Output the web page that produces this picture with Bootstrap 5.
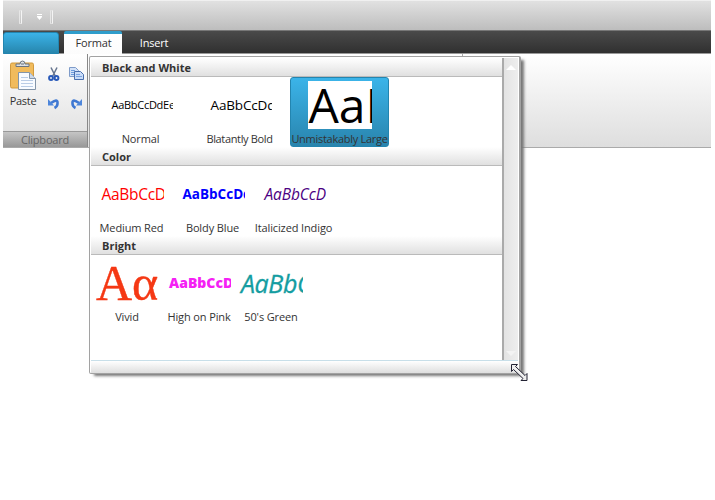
<!DOCTYPE html>
<html lang="en">
<head>
<meta charset="utf-8">
<title>Ribbon format gallery</title>
<link href="https://cdn.jsdelivr.net/npm/bootstrap@5.3.0/dist/css/bootstrap.min.css" rel="stylesheet">
<style>
body{width:715px;height:500px;font:11px/18px "Open Sans","Noto Sans",sans-serif;color:#333}
.ribbon{width:708px;margin-left:3px}
.quick{height:31px;background:linear-gradient(#e1e1e1,#bdbdbd);border-top:1px solid #f0f0f0;border-bottom:1px solid #777;padding:9px 0 0 16px}
.grip{width:3px;height:14px;border:1px solid #eee;border-color:#ddd #f4f4f4 #ddd #e6e6e6}
.tabs{height:23px;background:linear-gradient(#4a4a4a,#303030);border-bottom:1px solid #999}
.app-tab{width:56px;height:22px;margin-top:1px;background:linear-gradient(#3bb3e8,#2786ad);border:1px solid #2385b0;border-radius:3px 3px 0 0}
.on-tab{width:58px;height:23px;margin-left:5px;background:linear-gradient(#fff,#fcfcfc);border-top:3px solid #2f9dcb;line-height:18px;padding-left:1px;letter-spacing:-.2px;border-radius:2px 2px 0 0}
.off-tab{width:64px;line-height:24px;color:#fff;letter-spacing:-.2px}
.panel{height:94px;background:linear-gradient(#fff,#dedede);border-bottom:1px solid #aaa}
.group-box{width:85px;border-right:1px solid #888}
.group-title{height:16px;line-height:16px;background:linear-gradient(#c5c5c5,#989898);border-top:1px solid #999;color:#666;letter-spacing:-.2px}
.paste{width:40px;padding-top:6px;letter-spacing:-.3px}
.tools{width:44px;padding:13px 0 0 5px;display:grid;grid-template-columns:16px 16px;grid-template-rows:16px 16px;gap:14px 5px}
.rule-end{left:462px;top:54px;width:1px;height:3px;background:#aaa}
.gallery{left:89px;top:56px;width:432px;height:318px;background:#fff;border:1px solid #a2a2a2;border-right-width:2px;border-radius:2px;box-shadow:4px 3px 3px -1px #777;padding:1px 1px 0}
.gallery-main{width:411px}
.head{height:19px;padding-left:11px;font-weight:700;line-height:20px;background:linear-gradient(#fff,#e0e0e0);border-bottom:1px solid #bababa}
.items{height:70px}
.item{width:99px;height:70px;padding-top:4px}
.color .item{width:81px}.bright .item{width:72px}
.sample{width:64px;height:48px;margin:0 auto;overflow:hidden;white-space:nowrap;line-height:48px;color:#000;padding-left:3px}
.caption-line{line-height:20px;height:18px;text-align:center;white-space:nowrap;letter-spacing:-.12px}
.tight{letter-spacing:-.35px}
.chosen{margin-left:1px;background:linear-gradient(#3bb4e9,#2984ad);border:1px solid #2385b0;border-radius:3px;padding-top:3px}
.chosen .sample{background:#fff;padding-left:1px}
.chosen .caption-line{letter-spacing:-.28px}
.s1{font-size:11px;letter-spacing:-.28px}.s2{font-size:13.500px;letter-spacing:-.15px}.s3{font-size:48px}
.s4{font-size:15.500px;color:#f00;letter-spacing:-.3px;padding-left:2px}.s5{font-size:13.500px;font-weight:700;color:#00f;padding-left:2px}.s6{font-size:15.500px;font-style:italic;color:#4b0082;letter-spacing:-.1px}
.s7{font-family:"Liberation Serif",serif;font-size:50px;color:#f53814;padding-left:1px;-webkit-text-stroke:.4px #f53814}
.s8{font-size:14px;font-weight:800;color:#f520f5;padding-left:2px}
.s9{font-size:25px;font-style:italic;color:#149da1;letter-spacing:-.4px;padding-left:2px;-webkit-text-stroke:.3px #149da1}
.scroll{width:16px;border-left:2px solid #aaa;background:linear-gradient(90deg,#e3e3e3,#eee)}
.foot{height:13px;background:linear-gradient(#fff,#dedede);border-top:1px solid #c8dfe9}
.cursor{left:510px;top:363px}
</style>
<script src="https://cdn.jsdelivr.net/npm/bootstrap@5.3.0/dist/js/bootstrap.bundle.min.js"></script>
</head>
<body class="bg-white position-relative overflow-hidden">
<div class="ribbon">
 <div class="quick d-flex">
  <div class="grip"></div>
  <svg width="28" height="14"><path d="M15 4.500h5M15 6.500h5" stroke="#fff"/><path d="M15 7h5l-2.500 3z" fill="#fff"/></svg>
  <div class="grip"></div>
 </div>
 <div class="tabs d-flex">
  <div class="app-tab"></div>
  <div class="on-tab text-center">Format</div>
  <div class="off-tab text-center">Insert</div>
 </div>
 <div class="panel">
  <div class="group-box d-flex flex-column h-100">
   <div class="d-flex flex-grow-1">
    <div class="paste text-center">
     <svg class="d-block mx-auto" width="28" height="32" viewBox="0 0 28 32">
      <rect x="1.500" y="3" width="23" height="25" rx="1.5" fill="#f1bb5c" stroke="#d29a3d"/>
      <path d="M7 6.500V4h4q0-3 2.500-3t2.500 3h4v2.500z" fill="#dce0e6" stroke="#6a7480"/><path d="M12 4h3" stroke="#68717b"/>
      <path d="M9.500 12.500h11l6 6v11h-17z" fill="#f8fbff" stroke="#8395a9"/><path d="M20.500 12.500v6h6" fill="#cbd8e9" stroke="#8395a9"/>
      <path d="M12 17.500h7M12 20.500h12M12 23.500h12M12 26.500h12" stroke="#b9cce6"/>
     </svg>Paste
    </div>
    <div class="tools">
     <svg width="16" height="16"><path d="M3 .5l4.500 9M9 .5l-4.500 9" stroke="#65748e" stroke-width="1.500"/><circle cx="3" cy="11" r="1.900" fill="none" stroke="#2859b9" stroke-width="2"/><circle cx="8.500" cy="11" r="1.900" fill="none" stroke="#2859b9" stroke-width="2"/></svg>
     <svg width="16" height="16"><path d="M.5.500h6l3 3v6h-9z" fill="#d3e2f8" stroke="#7e9bc9"/><path d="M2 3.500h4M2 5.500h5M2 7.500h4" stroke="#6c9bdc"/><path d="M5.500 4.500h6l3 3v5h-9z" fill="#c9dcf8" stroke="#496fae"/><path d="M7 7.500h4M7 9.500h6" stroke="#7aa3e0"/></svg>
     <svg width="16" height="16"><path d="M3 6q7-5 6.500.5 0 3-3 4.500" fill="none" stroke="#3f78d2" stroke-width="2.600"/><path d="M0 2v6.500h6z" fill="#4d86db"/></svg>
     <svg width="16" height="16"><path d="M10 6q-7-5-6.500.5 0 3 3 4.500" fill="none" stroke="#3f78d2" stroke-width="2.600"/><path d="M13 2v6.500H7z" fill="#4d86db"/></svg>
    </div>
   </div>
   <div class="group-title text-center">Clipboard</div>
  </div>
 </div>
</div>
<div class="rule-end position-absolute"></div>
<div class="gallery position-absolute d-flex flex-column">
 <div class="d-flex flex-grow-1">
  <div class="gallery-main flex-shrink-0">
   <div class="head">Black and White</div>
   <div class="items d-flex">
    <div class="item"><div class="sample s1">AaBbCcDdEe</div><div class="caption-line">Normal</div></div>
    <div class="item"><div class="sample s2">AaBbCcDdEe</div><div class="caption-line tight">Blatantly Bold</div></div>
    <div class="item chosen"><div class="sample s3">AaBb</div><div class="caption-line">Unmistakably Large</div></div>
   </div>
   <div class="head">Color</div>
   <div class="items color d-flex">
    <div class="item"><div class="sample s4">AaBbCcDdEe</div><div class="caption-line">Medium Red</div></div>
    <div class="item"><div class="sample s5">AaBbCcDdEe</div><div class="caption-line">Boldy Blue</div></div>
    <div class="item"><div class="sample s6">AaBbCcDdEe</div><div class="caption-line">Italicized Indigo</div></div>
   </div>
   <div class="head">Bright</div>
   <div class="items bright d-flex">
    <div class="item"><div class="sample s7">Aα</div><div class="caption-line">Vivid</div></div>
    <div class="item"><div class="sample s8">AaBbCcDdEe</div><div class="caption-line">High on Pink</div></div>
    <div class="item"><div class="sample s9">AaBbCc</div><div class="caption-line">50's Green</div></div>
   </div>
  </div>
  <div class="scroll d-flex flex-column justify-content-between align-items-center">
   <svg width="10" height="14"><path d="M0 12l5-5 5 5z" fill="#fff"/></svg>
   <svg width="10" height="14"><path d="M0 5l5 5 5-5z" fill="#f3f3f3"/></svg>
  </div>
 </div>
 <div class="foot"></div>
</div>
<svg class="cursor position-absolute" width="20" height="20"><path d="M1.500 1.500h6l-2 2 9.500 9 2-2v7h-6l2-2-9.500-9-2 2z" fill="#eee" stroke="#223"/></svg>
</body>
</html>
